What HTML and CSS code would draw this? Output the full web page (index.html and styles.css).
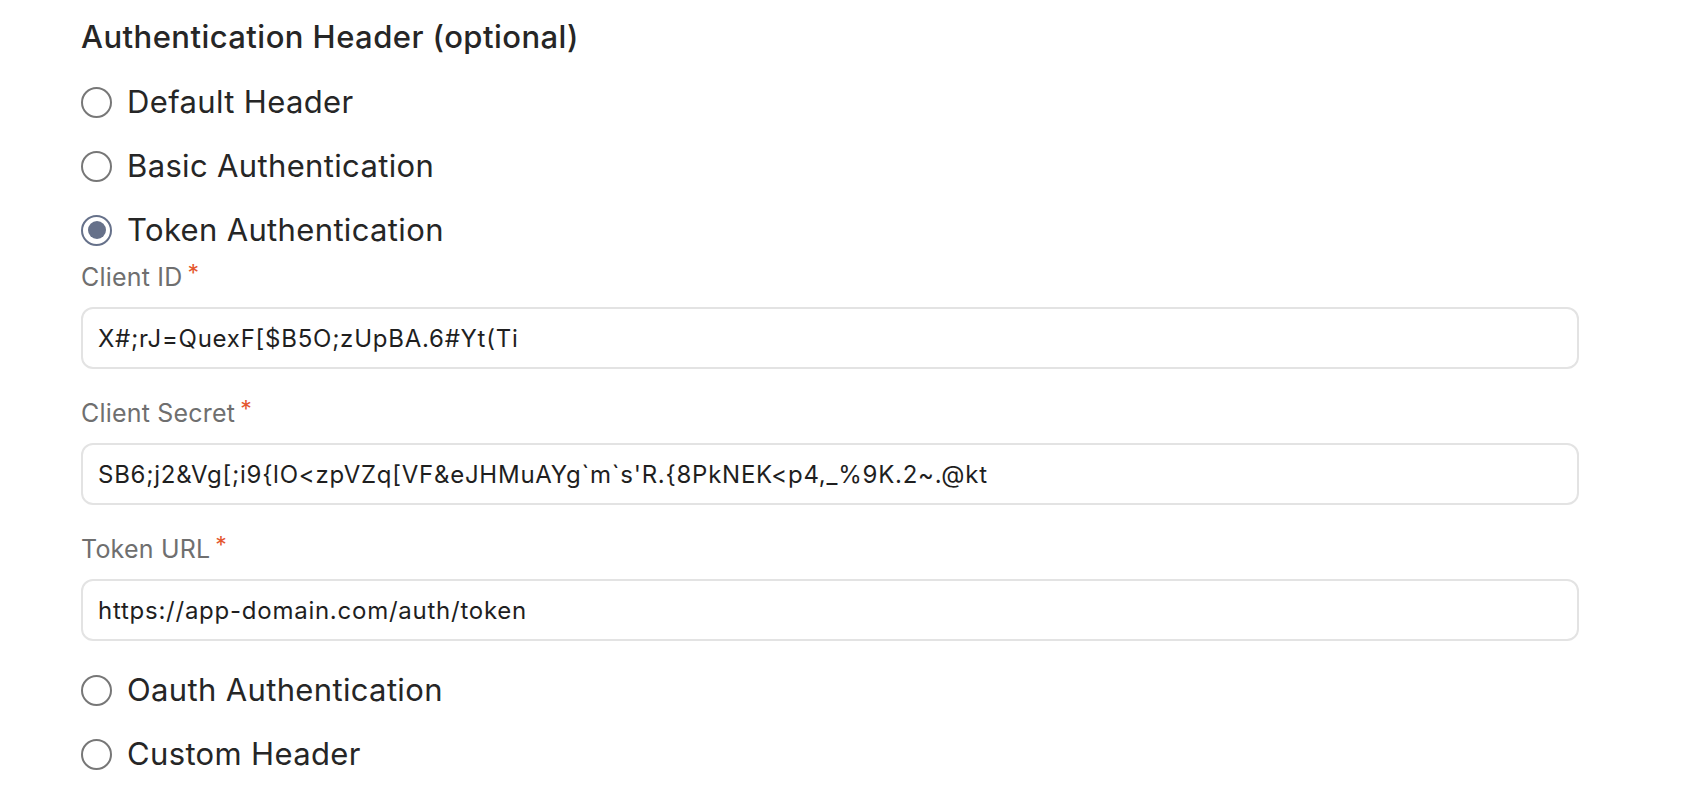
FILE: index.html
```html
<!DOCTYPE html>
<html lang="en">
<head>
<meta charset="utf-8">
<title>Authentication Header</title>
<link rel="stylesheet" href="styles.css">
</head>
<body>
<div class="form">
  <h2 class="title">Authentication Header (optional)</h2>
  <div class="options">
    <div class="radio"><span class="circle"></span><span class="rlabel">Default Header</span></div>
    <div class="radio"><span class="circle"></span><span class="rlabel">Basic Authentication</span></div>
    <div class="radio"><span class="circle checked"></span><span class="rlabel">Token Authentication</span></div>
    <div class="fields">
      <div class="field">
        <div class="flabel">Client ID<span class="req">*</span></div>
        <div class="input">X#;rJ=QuexF[$B5O;zUpBA.6#Yt(Ti</div>
      </div>
      <div class="field">
        <div class="flabel">Client Secret<span class="req">*</span></div>
        <div class="input">SB6;j2&amp;Vg[;i9{lO&lt;zpVZq[VF&amp;eJHMuAYg`m`s'R.{8PkNEK&lt;p4,_%9K.2~.@kt</div>
      </div>
      <div class="field">
        <div class="flabel">Token URL<span class="req">*</span></div>
        <div class="input">https://app-domain.com/auth/token</div>
      </div>
    </div>
    <div class="radio"><span class="circle"></span><span class="rlabel">Oauth Authentication</span></div>
    <div class="radio"><span class="circle"></span><span class="rlabel">Custom Header</span></div>
  </div>
</div>
</body>
</html>
```
FILE: styles.css
```css
html, body {
  margin: 0;
  padding: 0;
  background: #ffffff;
}
body {
  font-family: Inter, "Noto Sans", sans-serif;
  color: #262626;
}
.form {
  padding: 15px 0 0 81px;
  width: 1498px;
}
.title {
  margin: 0;
  font-size: 31px;
  line-height: 44px;
  font-weight: 500;
  letter-spacing: 0.45px;
  color: #262626;
  height: 55px;
}
.options {
  display: flex;
  flex-direction: column;
}
.radio {
  height: 64px;
  display: flex;
  align-items: center;
  gap: 15px;
}
.circle {
  box-sizing: border-box;
  width: 31px;
  height: 31px;
  border: 2px solid #777777;
  border-radius: 50%;
  display: flex;
  align-items: center;
  justify-content: center;
  flex: none;
}
.circle.checked {
  border-color: #66718a;
}
.circle.checked::after {
  content: "";
  width: 18px;
  height: 18px;
  border-radius: 50%;
  background: #66718a;
}
.rlabel {
  font-size: 31px;
  line-height: 38px;
  letter-spacing: 0.35px;
  color: #262626;
}
.fields {
  display: flex;
  flex-direction: column;
  padding-bottom: 17px;
}
.field {
  display: flex;
  flex-direction: column;
  gap: 14px;
  margin-bottom: 29px;
}
.field:last-child {
  margin-bottom: 0;
}
.flabel {
  font-size: 25px;
  line-height: 31px;
  letter-spacing: 0.2px;
  color: #6f6f6f;
}
.req {
  color: #e4572e;
  font-size: 23px;
  vertical-align: top;
  margin-left: 5px;
  position: relative;
  top: -4px;
}
.input {
  box-sizing: border-box;
  height: 62px;
  border: 2px solid #e3e3e3;
  border-radius: 12px;
  padding: 0 15px;
  display: flex;
  align-items: center;
  font-size: 24px;
  letter-spacing: 0.75px;
  color: #1f1f1f;
  white-space: pre;
}
```
